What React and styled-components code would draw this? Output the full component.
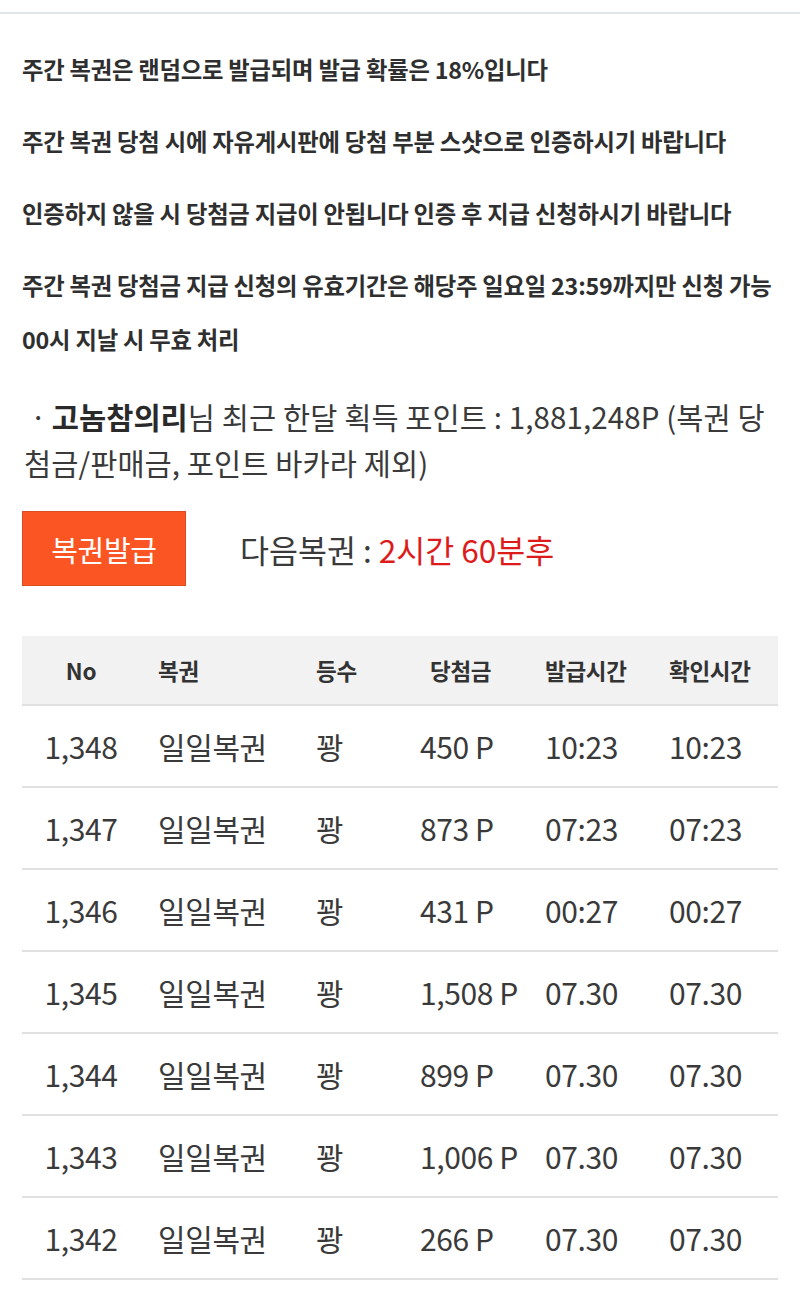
import styled, { createGlobalStyle } from "styled-components";

const GlobalStyle = createGlobalStyle`
  body {
    margin: 0;
    background: #ffffff;
    font-family: "Noto Sans CJK KR", "Noto Sans", sans-serif;
    color: #333333;
  }
`;

const Page = styled.div`
  width: 800px;
  min-height: 1293px;
  background: #ffffff;
`;

const TopBar = styled.div`
  height: 12px;
  border-bottom: 2px solid #dfe5ea;
`;

const Content = styled.div`
  padding: 28px 22px 0 22px;
`;

const Notice = styled.p`
  margin: 0 0 18px 0;
  font-size: 23.3px;
  font-weight: 700;
  line-height: 54px;
  color: #2f2f2f;
  letter-spacing: -0.2px;
`;

const PointInfo = styled.p`
  margin: 27px 0 0 2px;
  font-size: 29.5px;
  line-height: 46px;
  color: #3a3a3a;
  letter-spacing: 0.1px;

  strong {
    font-weight: 700;
    color: #2a2a2a;
  }
`;

const Dot = styled.span`
  display: inline-block;
  margin: 0 5px 0 6px;
`;

const IssueRow = styled.div`
  display: flex;
  align-items: center;
  gap: 54px;
  margin-top: 26px;
`;

const IssueButton = styled.button`
  width: 164px;
  height: 75px;
  padding: 0;
  background: #fb5524;
  border: 1px solid #d94d22;
  color: #ffffff;
  font-family: inherit;
  font-size: 29px;
  letter-spacing: -0.3px;
  cursor: pointer;
`;

const NextText = styled.span`
  font-size: 31.5px;
  color: #3a3a3a;
`;

const Remain = styled.span`
  color: #dd1b1b;
`;

const Table = styled.div`
  margin-top: 50px;
  width: 756px;
`;

const cols = "118px 158px 104px 125px 124px 127px";

const HeadRow = styled.div`
  display: grid;
  grid-template-columns: ${cols};
  height: 68px;
  align-items: center;
  background: #f2f2f2;
  border-bottom: 2px solid #e0e0e0;
`;

const HeadCell = styled.div`
  font-size: 22.5px;
  font-weight: 700;
  color: #333333;
  white-space: nowrap;
  letter-spacing: -0.3px;
  text-align: ${(p) => (p.center ? "center" : "left")};
  padding-left: ${(p) => (p.center ? 0 : p.pad || 18)}px;
`;

const Row = styled.div`
  display: grid;
  grid-template-columns: ${cols};
  height: 80px;
  align-items: center;
  border-bottom: 2px solid #e0e0e0;
`;

const Cell = styled.div`
  font-size: 30px;
  color: #3a3a3a;
  letter-spacing: -0.4px;
  white-space: nowrap;
  text-align: ${(p) => (p.center ? "center" : "left")};
  padding-left: ${(p) => (p.center ? 0 : 18)}px;
`;

const rows = [
  ["1,348", "450 P", "10:23", "10:23"],
  ["1,347", "873 P", "07:23", "07:23"],
  ["1,346", "431 P", "00:27", "00:27"],
  ["1,345", "1,508 P", "07.30", "07.30"],
  ["1,344", "899 P", "07.30", "07.30"],
  ["1,343", "1,006 P", "07.30", "07.30"],
  ["1,342", "266 P", "07.30", "07.30"],
];

export default function App() {
  return (
    <Page>
      <GlobalStyle />
      <TopBar />
      <Content>
        <Notice>주간 복권은 랜덤으로 발급되며 발급 확률은 18%입니다</Notice>
        <Notice>주간 복권 당첨 시에 자유게시판에 당첨 부분 스샷으로 인증하시기 바랍니다</Notice>
        <Notice>인증하지 않을 시 당첨금 지급이 안됩니다 인증 후 지급 신청하시기 바랍니다</Notice>
        <Notice>주간 복권 당첨금 지급 신청의 유효기간은 해당주 일요일 23:59까지만 신청 가능 00시 지날 시 무효 처리</Notice>

        <PointInfo>
          <Dot>·</Dot><strong>고놈참의리</strong>님 최근 한달 획득 포인트 : 1,881,248P (복권 당첨금/판매금, 포인트 바카라 제외)
        </PointInfo>

        <IssueRow>
          <IssueButton>복권발급</IssueButton>
          <NextText>
            다음복권 : <Remain>2시간 60분후</Remain>
          </NextText>
        </IssueRow>

        <Table>
          <HeadRow>
            <HeadCell center>No</HeadCell>
            <HeadCell>복권</HeadCell>
            <HeadCell>등수</HeadCell>
            <HeadCell pad={28}>당첨금</HeadCell>
            <HeadCell>발급시간</HeadCell>
            <HeadCell>확인시간</HeadCell>
          </HeadRow>
          {rows.map((r) => (
            <Row key={r[0]}>
              <Cell center>{r[0]}</Cell>
              <Cell>일일복권</Cell>
              <Cell>꽝</Cell>
              <Cell>{r[1]}</Cell>
              <Cell>{r[2]}</Cell>
              <Cell>{r[3]}</Cell>
            </Row>
          ))}
        </Table>
      </Content>
    </Page>
  );
}
